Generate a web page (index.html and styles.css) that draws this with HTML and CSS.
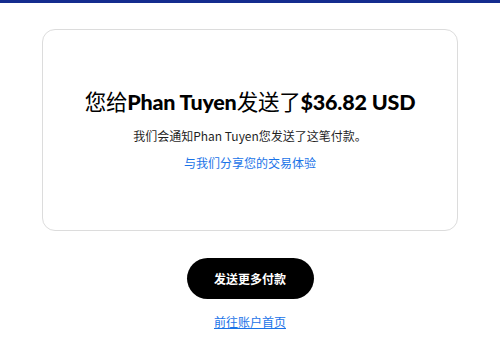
FILE: index.html
```html
<!DOCTYPE html>
<html lang="zh-CN">
<head>
<meta charset="utf-8">
<link rel="stylesheet" href="styles.css">
</head>
<body>
<div class="topbar"></div>
<main class="page">
  <section class="card">
    <h1 class="title">您给<b>Phan Tuyen</b>发送了<b>$36.82 USD</b></h1>
    <p class="note">我们会通知Phan Tuyen您发送了这笔付款。</p>
    <a class="share" href="#">与我们分享您的交易体验</a>
  </section>
  <a class="btn" href="#">发送更多付款</a>
  <a class="home" href="#">前往账户首页</a>
</main>
</body>
</html>
```
FILE: styles.css
```css
html, body { margin: 0; padding: 0; background: #fff; }
body { font-family: "Lato", "Noto Sans CJK SC", sans-serif; color: #000; }
.topbar { height: 3px; background: #142c8e; }
.page { display: flex; flex-direction: column; align-items: center; }
.card {
  box-sizing: border-box;
  margin-top: 26px;
  width: 416px;
  height: 202px;
  border: 1.5px solid #dcdcdc;
  border-radius: 13px;
  display: flex;
  flex-direction: column;
  align-items: center;
  padding-top: 57px;
}
.title {
  margin: 0;
  font-size: 21.5px;
  font-weight: 400;
  line-height: 30px;
  letter-spacing: -0.2px;
}
.title b { font-weight: 900; }
.note {
  margin: 10px 0 0;
  font-family: "Noto Sans CJK SC", sans-serif;
  font-size: 12px;
  line-height: 18px;
  color: #1f1f1f;
}
.share {
  margin-top: 10px;
  font-size: 12px;
  line-height: 18px;
  color: #1a73e8;
  text-decoration: none;
}
.btn {
  margin-top: 27px;
  width: 127px;
  height: 41px;
  border-radius: 21px;
  background: #000;
  color: #fff;
  font-size: 12px;
  font-weight: 700;
  display: flex;
  align-items: center;
  justify-content: center;
  text-decoration: none;
}
.home {
  margin-top: 15px;
  font-size: 12px;
  line-height: 18px;
  color: #1a73e8;
  text-decoration: underline;
}
```
